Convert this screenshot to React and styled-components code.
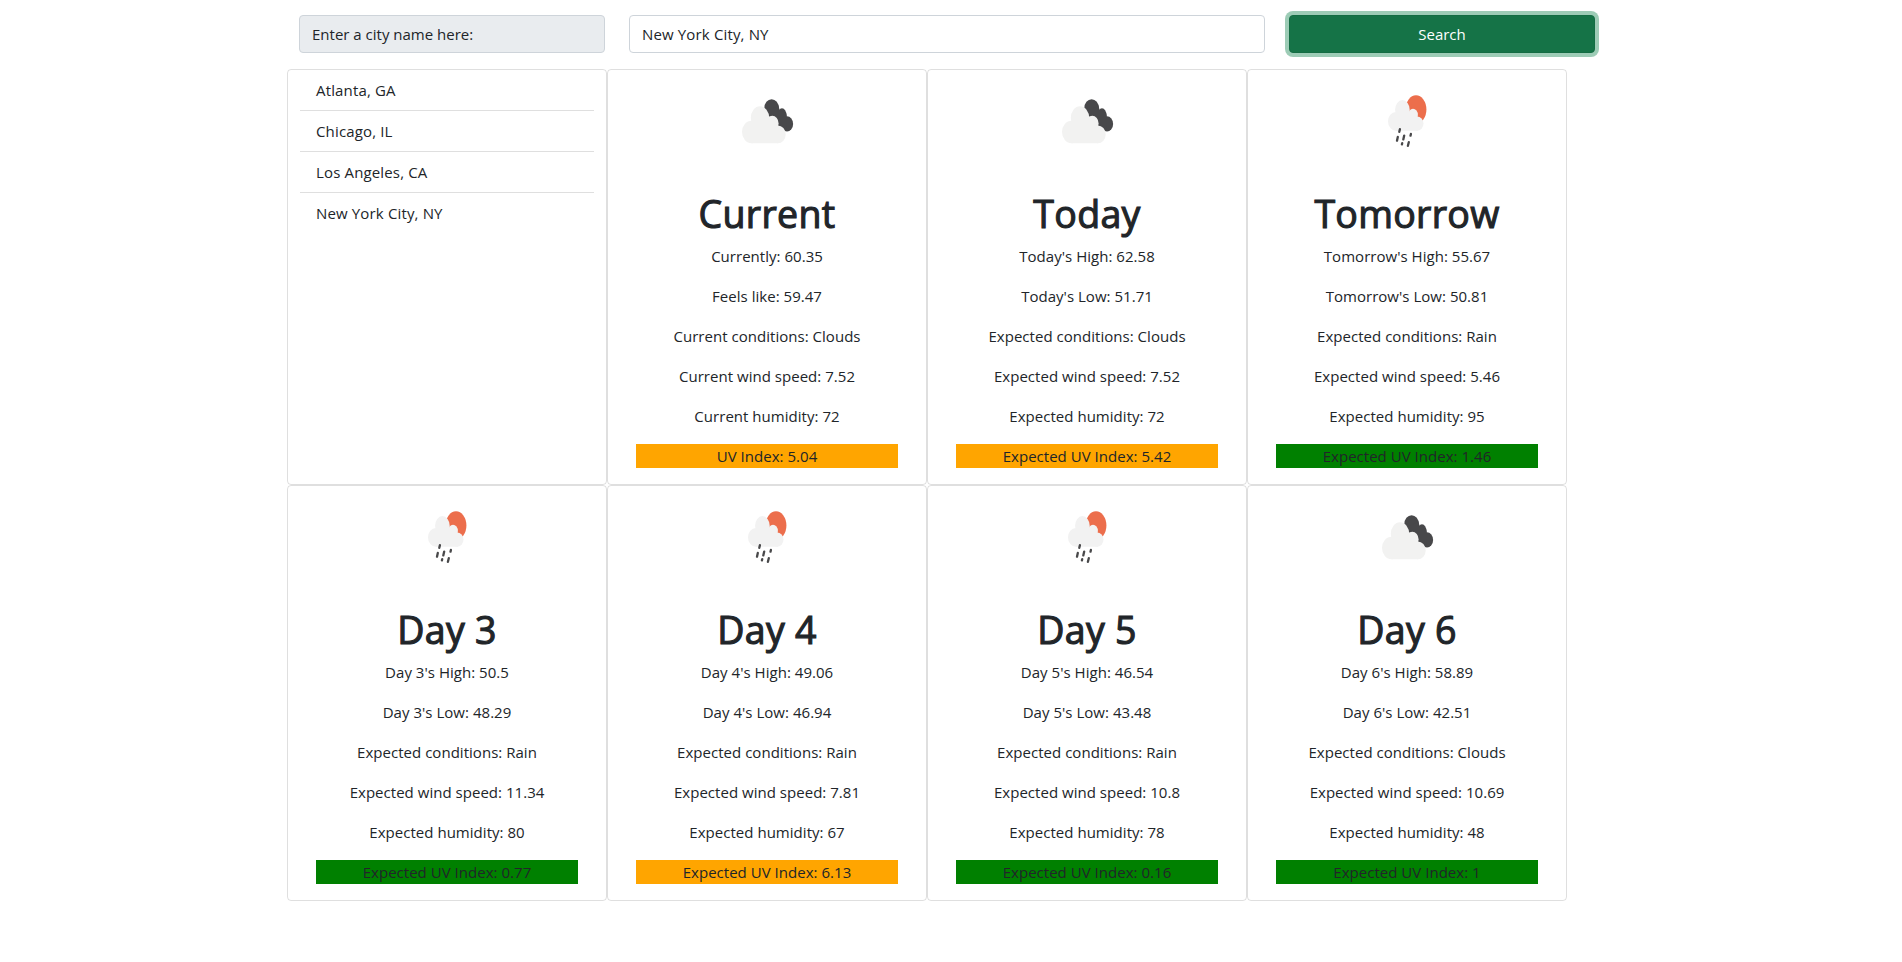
import React, { useState } from "react";
import styled, { createGlobalStyle } from "styled-components";

const GlobalStyle = createGlobalStyle`
  *, *::before, *::after { box-sizing: border-box; }
  body {
    margin: 0;
    background: #fff;
    color: #212529;
    font-family: "Open Sans", "Noto Sans", sans-serif;
    font-size: 15px;
    line-height: 24px;
    letter-spacing: 0.03px;
  }
`;

const Page = styled.main`
  width: 1320px;
  margin-left: 287px;
  padding-top: 15px;
`;

const SearchBar = styled.form`
  display: grid;
  grid-template-columns: 1fr 2fr 1fr;
  margin-bottom: 16px;
`;

const Column = styled.div`
  padding: 0 12px;
`;

const FieldLabel = styled.label`
  display: block;
  height: 38px;
  padding: 6px 12px;
  border: 1px solid #ced4da;
  border-radius: 4px;
  background: #e9ecef;
  letter-spacing: 0;
`;

const CityInput = styled.input`
  display: block;
  width: 100%;
  height: 38px;
  padding: 6px 12px;
  border: 1px solid #ced4da;
  border-radius: 4px;
  background: #fff;
  color: inherit;
  font: inherit;
  letter-spacing: 0.15px;
  outline: 0;
`;

const SearchButton = styled.button`
  display: block;
  width: 100%;
  height: 38px;
  padding: 6px 12px;
  border: 1px solid #146c43;
  border-radius: 4px;
  background: #157347;
  box-shadow: 0 0 0 4px rgba(60, 153, 110, 0.5);
  color: #fff;
  font: inherit;
  text-align: center;
`;

const CardGrid = styled.section`
  display: grid;
  grid-template-columns: repeat(4, 320px);
  grid-auto-rows: 416px;
`;

const Card = styled.article`
  padding: 0 ${(p) => (p.$list ? 12 : 28)}px;
  border: 1px solid rgba(0, 0, 0, 0.125);
  border-radius: 4px;
  text-align: ${(p) => (p.$list ? "left" : "center")};
`;

const CityList = styled.ul`
  margin: 0;
  padding: 0;
  list-style: none;
`;

const CityItem = styled.li`
  padding: 8px 16px;
  border-bottom: 1px solid rgba(0, 0, 0, 0.125);
  letter-spacing: 0.15px;
  &:last-child { border-bottom: 0; }
`;

const Icon = styled.svg`
  display: block;
  width: 100px;
  height: 100px;
  margin: 0 auto 20px;
`;

/* A thin stroke thickens the regular cut to a medium weight. */
const Title = styled.h1`
  margin: 0 0 6px;
  font-size: 37.5px;
  font-weight: 500;
  line-height: 48px;
  letter-spacing: 0.3px;
  -webkit-text-stroke: 1.1px currentColor;
`;

const Reading = styled.p`
  margin: 0 0 16px;
`;

const UvIndex = styled(Reading)`
  background: ${(p) => (p.$level < 3 ? "green" : "orange")};
`;

function CloudsIcon() {
  return (
    <Icon viewBox="0 0 100 100" aria-label="Clouds">
      <g fill="#48484a">
        <ellipse cx="54.6" cy="38.2" rx="7.3" ry="9" />
        <ellipse cx="65" cy="45.5" rx="4.6" ry="7.2" />
        <ellipse cx="70" cy="53.9" rx="6.1" ry="7.7" />
        <path d="M50 41 L61.4 35.5 L62.6 39.8 L69.2 43.5 L69.8 47 L70 61 L58 56 Z" />
      </g>
      <g fill="#f2f2f1">
        <ellipse cx="43" cy="48" rx="9.2" ry="11.7" />
        <ellipse cx="34.7" cy="62" rx="9.7" ry="11.2" />
        <ellipse cx="55.3" cy="53.4" rx="6.3" ry="7.6" />
        <ellipse cx="60.8" cy="64.4" rx="7.9" ry="8.9" />
        <path d="M35 50 H55 L61 62 V73.2 H34.7 Z" />
      </g>
    </Icon>
  );
}

function RainIcon() {
  return (
    <Icon viewBox="0 0 100 100" aria-label="Rain">
      <ellipse cx="59" cy="39.5" rx="10.4" ry="14.2" fill="#ec6e4c" />
      <g fill="#f2f2f2">
        <ellipse cx="45.4" cy="39.7" rx="7.3" ry="9.6" />
        <ellipse cx="38.9" cy="51.4" rx="7.9" ry="9.4" />
        <ellipse cx="56" cy="45" rx="4.9" ry="6.3" />
        <ellipse cx="60" cy="53.6" rx="6.5" ry="7.2" />
        <path d="M39 42 H55 L61 52 V60.8 H39 Z" />
      </g>
      <g stroke="#48484a" strokeWidth="2.3" strokeLinecap="round">
        <path d="M42.9 59.2 L42.3 61.8" />
        <path d="M40.8 66.9 L40 70.7" />
        <path d="M47.2 65.6 L46.3 69.4" />
        <path d="M53.9 63.9 L53.5 65.7" />
        <path d="M45.2 73.2 L44.9 74.4" />
        <path d="M51.8 72.2 L50.9 75.8" />
      </g>
    </Icon>
  );
}

const cities = ["Atlanta, GA", "Chicago, IL", "Los Angeles, CA", "New York City, NY"];

const day = (title, high, low, conditions, wind, humidity, uv) => ({
  title,
  conditions,
  uv,
  readings: [
    `${title}'s High: ${high}`,
    `${title}'s Low: ${low}`,
    `Expected conditions: ${conditions}`,
    `Expected wind speed: ${wind}`,
    `Expected humidity: ${humidity}`,
  ],
  uvLabel: "Expected UV Index",
});

const forecasts = [
  {
    title: "Current",
    conditions: "Clouds",
    uv: 5.04,
    readings: [
      "Currently: 60.35",
      "Feels like: 59.47",
      "Current conditions: Clouds",
      "Current wind speed: 7.52",
      "Current humidity: 72",
    ],
    uvLabel: "UV Index",
  },
  day("Today", 62.58, 51.71, "Clouds", 7.52, 72, 5.42),
  day("Tomorrow", 55.67, 50.81, "Rain", 5.46, 95, 1.46),
  day("Day 3", 50.5, 48.29, "Rain", 11.34, 80, 0.77),
  day("Day 4", 49.06, 46.94, "Rain", 7.81, 67, 6.13),
  day("Day 5", 46.54, 43.48, "Rain", 10.8, 78, 0.16),
  day("Day 6", 58.89, 42.51, "Clouds", 10.69, 48, 1),
];

function ForecastCard({ forecast }) {
  return (
    <Card>
      {forecast.conditions === "Rain" ? <RainIcon /> : <CloudsIcon />}
      <Title>{forecast.title}</Title>
      {forecast.readings.map((text) => (
        <Reading key={text}>{text}</Reading>
      ))}
      <UvIndex $level={forecast.uv}>{`${forecast.uvLabel}: ${forecast.uv}`}</UvIndex>
    </Card>
  );
}

export default function App() {
  const [city, setCity] = useState("New York City, NY");
  return (
    <>
      <GlobalStyle />
      <Page>
        <SearchBar onSubmit={(e) => e.preventDefault()}>
          <Column>
            <FieldLabel htmlFor="city">Enter a city name here:</FieldLabel>
          </Column>
          <Column>
            <CityInput id="city" value={city} onChange={(e) => setCity(e.target.value)} />
          </Column>
          <Column>
            <SearchButton type="submit">Search</SearchButton>
          </Column>
        </SearchBar>
        <CardGrid>
          <Card $list>
            <CityList>
              {cities.map((name) => (
                <CityItem key={name} onClick={() => setCity(name)}>{name}</CityItem>
              ))}
            </CityList>
          </Card>
          {forecasts.map((forecast) => (
            <ForecastCard key={forecast.title} forecast={forecast} />
          ))}
        </CardGrid>
      </Page>
    </>
  );
}
